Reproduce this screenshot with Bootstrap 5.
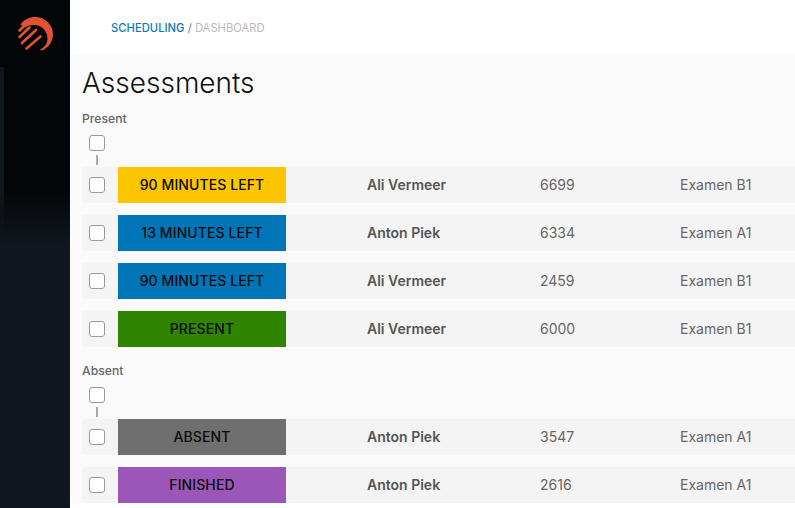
<!DOCTYPE html>
<html lang="en">
<head>
<meta charset="utf-8">
<title>Assessments</title>
<link href="https://cdn.jsdelivr.net/npm/bootstrap@5.3.0/dist/css/bootstrap.min.css" rel="stylesheet">
<style>
html,body{height:508px;overflow:hidden;background:#fff}
body{font-family:Inter,"Liberation Sans",sans-serif;color:#555}
.shell{height:508px}
.side-rail{width:70px;flex:none;height:508px;background:linear-gradient(#030608 0,#030608 190px,#10171e 245px,#10171e 100%);position:relative}
.side-rail::before{content:"";position:absolute;left:0;top:67px;width:4px;height:175px;background:linear-gradient(#10171e,#10171e 70%,rgba(16,23,30,0))}
.rail-logo{position:absolute;left:17px;top:17px;width:36px;height:34px}
.main-col{min-width:0;overflow:hidden}
.crumb-bar{height:55px;padding-left:41px;font-size:11.25px;color:#bbb;padding-top:2px}
.crumb-bar b{font-weight:500;color:#0d7ab8}
.panel{background:#fafafa;padding:0 0 0 11px;margin-left:1px;height:448px}
.page-head{font-family:Inter,sans-serif;font-weight:300;font-size:28px;line-height:34px;color:#111;padding-top:11px;height:45px;margin:0}
.sect{font-size:12.2px;font-weight:500;line-height:16px;color:#666;margin-top:11px;height:16px}
.sect-abs{margin-top:16px}
.sel-all{height:40px;padding-left:7px;padding-top:8px}
.boxy{appearance:none;display:block;width:16px;height:16px;border:1px solid #999;border-radius:3px;background:#fff;margin:0}
.tick{width:2px;height:10px;background:#aaa;margin:4px 0 0 7px}
.row-item{height:36px;background:#f4f4f4;border-radius:4px 0 0 4px;margin-bottom:12px}
.box-cell{width:36px;flex:none;padding-left:7px}
.status{width:168px;flex:none;height:36px;font-size:14px;font-weight:500;color:#0b0b0b;line-height:36px;text-align:center;letter-spacing:.1px}
.s-y{background:#fcc500}.s-b{background:#0076b8}.s-g{background:#2f8400}.s-gr{background:#6f6f6f}.s-p{background:#9c56b8}
.who{width:254px;flex:none;padding-left:81px;padding-bottom:2px;font-size:14px;font-weight:600;color:#555}
.code{width:140px;flex:none;padding-bottom:2px;font-size:14px;color:#666}
.exam{font-size:14px;padding-bottom:2px;color:#666;white-space:nowrap}
</style>
</head>
<body>
<div class="d-flex shell">
  <aside class="side-rail">
    <svg class="rail-logo" viewBox="0 0 36 34" aria-label="logo">
      <path fill="#e25232" d="M3.500 7.500C7 2.500 12.500 0 18 0c10 0 18 7.800 18 17.300 0 6.700-3.800 12.700-9.500 15.500-1.500.700-3 .700-4 .1 5.200-2.300 8-6.500 8-11.400C30.500 14 24.500 8 17 8c-4 0-6.500.8-9 2.500Z"/>
      <g stroke="#e25232" stroke-width="2.600" stroke-linecap="round" fill="none">
        <path d="M2.500 13.500 7 9"/><path d="M2.500 20 12.500 10.500"/><path d="M5 26 19 13"/><path d="M9.500 31.500 23.500 19.500"/>
      </g>
    </svg>
  </aside>
  <div class="flex-grow-1 main-col">
    <div class="crumb-bar d-flex align-items-center"><span><b>SCHEDULING</b> <span class="text-secondary">/</span> DASHBOARD</span></div>
    <main class="panel">
      <h1 class="page-head">Assessments</h1>
      <div class="sect">Present</div>
      <div class="sel-all"><input class="boxy" type="checkbox" aria-label="Select all"><div class="tick"></div></div>
      <div class="row-item d-flex align-items-center"><div class="box-cell"><input class="boxy" type="checkbox" aria-label="Select"></div><div class="status s-y">90 MINUTES LEFT</div><div class="who">Ali Vermeer</div><div class="code">6699</div><div class="exam">Examen B1</div></div>
      <div class="row-item d-flex align-items-center"><div class="box-cell"><input class="boxy" type="checkbox" aria-label="Select"></div><div class="status s-b">13 MINUTES LEFT</div><div class="who">Anton Piek</div><div class="code">6334</div><div class="exam">Examen A1</div></div>
      <div class="row-item d-flex align-items-center"><div class="box-cell"><input class="boxy" type="checkbox" aria-label="Select"></div><div class="status s-b">90 MINUTES LEFT</div><div class="who">Ali Vermeer</div><div class="code">2459</div><div class="exam">Examen B1</div></div>
      <div class="row-item d-flex align-items-center"><div class="box-cell"><input class="boxy" type="checkbox" aria-label="Select"></div><div class="status s-g">PRESENT</div><div class="who">Ali Vermeer</div><div class="code">6000</div><div class="exam">Examen B1</div></div>
      <div class="sect sect-abs">Absent</div>
      <div class="sel-all"><input class="boxy" type="checkbox" aria-label="Select all"><div class="tick"></div></div>
      <div class="row-item d-flex align-items-center"><div class="box-cell"><input class="boxy" type="checkbox" aria-label="Select"></div><div class="status s-gr">ABSENT</div><div class="who">Anton Piek</div><div class="code">3547</div><div class="exam">Examen A1</div></div>
      <div class="row-item d-flex align-items-center"><div class="box-cell"><input class="boxy" type="checkbox" aria-label="Select"></div><div class="status s-p">FINISHED</div><div class="who">Anton Piek</div><div class="code">2616</div><div class="exam">Examen A1</div></div>
    </main>
  </div>
</div>
<script src="https://cdn.jsdelivr.net/npm/bootstrap@5.3.0/dist/js/bootstrap.bundle.min.js"></script>
</body>
</html>
